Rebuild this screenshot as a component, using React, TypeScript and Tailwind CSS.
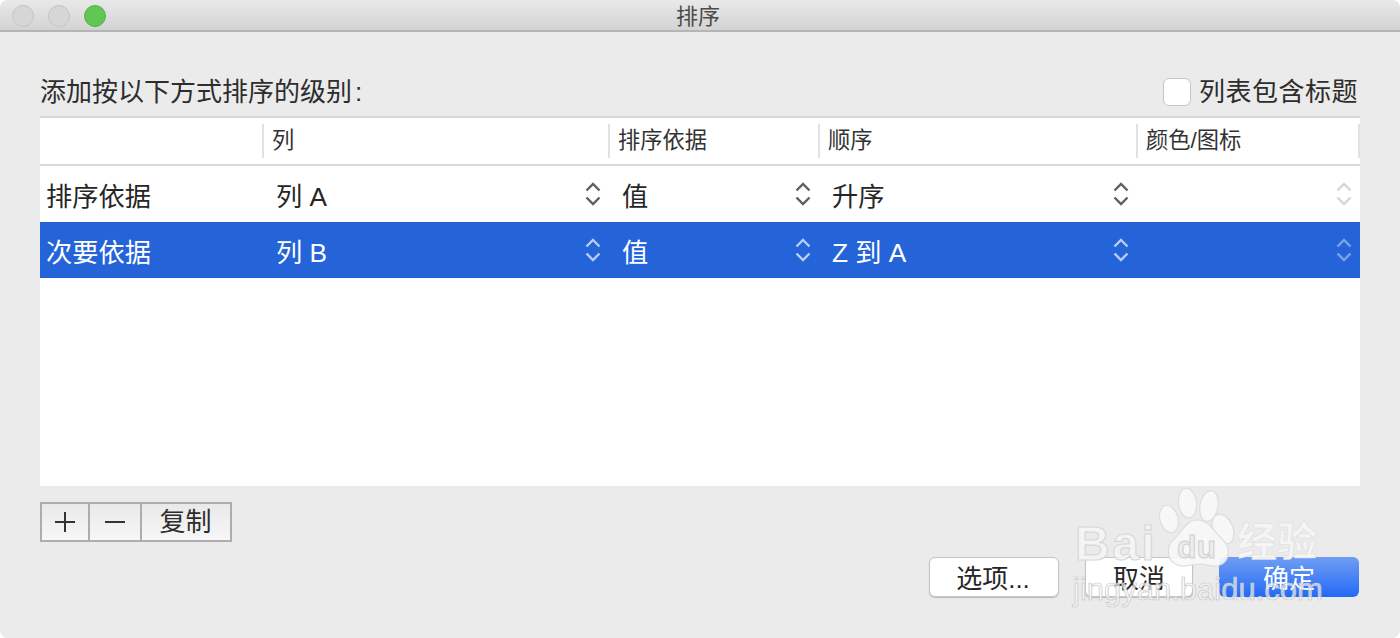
const cjk = "font-['Liberation_Sans','Noto_Sans_CJK_SC',sans-serif]";

function Chevrons({ color }: { color: string }) {
  return (
    <svg width="16" height="24" viewBox="0 0 16 24" fill="none" stroke={color} strokeWidth="2.4" className="shrink-0">
      <path d="M1.5 8.5 L8 2 L14.5 8.5" />
      <path d="M1.5 15.5 L8 22 L14.5 15.5" />
    </svg>
  );
}

function Cell({ w, text, color, chev, pl }: { w: string; text: string; color: string; chev: string; pl: string }) {
  return (
    <div className={`${w} ${pl} flex items-center justify-between pr-[7px] text-[26.25px] leading-none ${color}`}>
      <span className="whitespace-pre pt-[6px]">{text}</span>
      <Chevrons color={chev} />
    </div>
  );
}

function Row({ name, a, b, c, selected }: { name: string; a: string; b: string; c: string; selected?: boolean }) {
  const text = selected ? "text-white" : "text-[#262626]";
  const chev = selected ? "#b9cdf5" : "#5f5f5f";
  const faint = selected ? "#7ea3ea" : "#d6d6d6";
  return (
    <div className={`flex h-[56px] items-center ${selected ? "bg-[#2464d8]" : "bg-white"}`}>
      <div className={`w-[222px] pl-[6px] pt-[6px] text-[26.25px] leading-none ${text}`}>{name}</div>
      <Cell w="w-[346px]" pl="pl-[14px]" text={a} color={text} chev={chev} />
      <Cell w="w-[210px]" pl="pl-[14px]" text={b} color={text} chev={chev} />
      <Cell w="w-[318px]" pl="pl-[14px]" text={c} color={text} chev={chev} />
      <div className="flex w-[224px] justify-end pr-[8px]">
        <Chevrons color={faint} />
      </div>
    </div>
  );
}

function Head({ w, text, last }: { w: string; text: string; last?: boolean }) {
  return (
    <div className={`${w} relative h-[34px] border-l-2 border-[#e2e2e2] pl-[8px] text-[22.25px] leading-[34px] text-[#333333] ${last ? "border-r-2" : ""}`}>
      {text}
    </div>
  );
}

function Watermark() {
  return (
    <div className="pointer-events-none absolute left-[1072px] top-[486px] h-[125px] w-[260px]">
      <svg width="78" height="84" viewBox="0 0 78 84" className="absolute left-[86px] top-0" fill="#f8f8f8" stroke="#dddddd" strokeWidth="1.2" fillOpacity="0.9">
        <ellipse cx="11" cy="33" rx="9" ry="14" transform="rotate(-15 11 33)" />
        <ellipse cx="29.5" cy="17" rx="9" ry="15" transform="rotate(-6 29.5 17)" />
        <ellipse cx="51" cy="20" rx="9" ry="15.5" transform="rotate(10 51 20)" />
        <ellipse cx="65" cy="43" rx="10" ry="15.5" transform="rotate(-22 65 43)" />
        <path d="M39 34 C28 34 24 46 17 52 C6 60 8 80 26 80 C32 80 36 78 41 78 C48 78 52 81 58 80 C72 78 74 62 64 53 C56 46 52 34 39 34 Z" />
      </svg>
      <div className="absolute left-[3px] top-[34px] text-[48px] font-bold leading-none tracking-[2.5px] text-[#f6f6f6]/90 [-webkit-text-stroke:1.2px_#d8d8d8]">
        Bai
      </div>
      <div className="absolute left-[105px] top-[45px] text-[32px] font-bold leading-none text-[#ececec] [-webkit-text-stroke:1px_#cfcfcf]">du</div>
      <div className="absolute left-[165px] top-[36px] text-[40px] font-bold leading-none text-[#f6f6f6]/95 [-webkit-text-stroke:0.5px_#dcdcdc]">经验</div>
      <div className="absolute left-[1px] top-[88px] text-[31px] leading-none text-[#f7f7f7]/70 [-webkit-text-stroke:0.7px_#c8c8c8]">
        jingyan.baidu.com
      </div>
    </div>
  );
}

export default function App() {
  return (
    <div className={`relative h-[638px] w-[1400px] overflow-hidden rounded-[8px] bg-[#ebebeb] ${cjk}`}>
      <div className="flex h-[32px] items-center justify-center border-b-2 border-[#b5b5b5] bg-gradient-to-b from-[#e9e9e9] to-[#d3d3d3] pr-[4px]">
        <div className="absolute left-[12px] top-[5px] flex gap-[14px]">
          <div className="h-[22px] w-[22px] rounded-full border border-[#c4c4c4] bg-[#d6d6d6]" />
          <div className="h-[22px] w-[22px] rounded-full border border-[#c4c4c4] bg-[#d6d6d6]" />
          <div className="h-[22px] w-[22px] rounded-full border border-[#54b04a] bg-[#62c655]" />
        </div>
        <span className="pt-[4px] text-[22px] leading-none text-[#4c4c4c]">排序</span>
      </div>

      <div className="px-[40px]">
        <div className="flex h-[84px] items-end justify-between pb-[9px]">
          <span className="text-[26px] leading-[30px] text-[#2d2d2d]">
            添加按以下方式排序的级别<span className="ml-[3px]">:</span>
          </span>
          <label className="flex items-center gap-[8px] pr-[2px]">
            <span className="h-[28px] w-[28px] rounded-[6px] border border-[#c6c6c6] bg-white" />
            <span className="text-[26px] leading-[30px] tracking-[0.5px] text-[#2d2d2d]">列表包含标题</span>
          </label>
        </div>

        <div className="h-[370px] bg-white">
          <div className="flex h-[50px] items-center border-y-2 border-[#d8d8d8] bg-white">
            <div className="w-[222px]" />
            <Head w="w-[346px]" text="列" />
            <Head w="w-[210px]" text="排序依据" />
            <Head w="w-[318px]" text="顺序" />
            <Head w="w-[224px]" text="颜色/图标" last />
          </div>
          <Row name="排序依据" a="列 A" b="值" c="升序" />
          <Row name="次要依据" a="列 B" b="值" c="Z 到 A" selected />
        </div>

        <div className="mt-[16px] flex items-start justify-between">
          <div className="flex h-[40px] border-2 border-[#adadad] bg-gradient-to-b from-[#e9e9e9] to-[#f7f7f7] text-[#2d2d2d]">
            <div className="flex w-[48px] items-center justify-center border-r-2 border-[#adadad]">
              <svg width="22" height="22" viewBox="0 0 22 22" stroke="#333333" strokeWidth="2">
                <path d="M11 1 V21 M1 11 H21" />
              </svg>
            </div>
            <div className="flex w-[52px] items-center justify-center border-r-2 border-[#adadad]">
              <svg width="22" height="22" viewBox="0 0 22 22" stroke="#333333" strokeWidth="2">
                <path d="M1 11 H21" />
              </svg>
            </div>
            <div className="flex w-[88px] items-center justify-center pr-[1px] text-[26px] leading-none">复制</div>
          </div>

          <div className="mr-[1px] mt-[55px] flex items-center text-[26px] leading-none">
            <div className="flex h-[40px] w-[130px] items-center justify-center rounded-[6px] border border-[#c4c4c4] bg-white pt-[4px] text-[#262626] shadow-[0_1px_1px_rgba(0,0,0,0.2)]">
              <span className="pr-[2px]">选项...</span>
            </div>
            <div className="ml-[26px] flex h-[40px] w-[108px] items-center justify-center rounded-[6px] border border-[#c4c4c4] bg-white pt-[4px] text-[#262626] shadow-[0_1px_1px_rgba(0,0,0,0.2)]">
              取消
            </div>
            <div className="ml-[26px] flex h-[40px] w-[140px] items-center justify-center rounded-[6px] bg-gradient-to-b from-[#6f9df3] to-[#2169f5] pt-[4px] text-white">
              确定
            </div>
          </div>
        </div>
      </div>
      <Watermark />
    </div>
  );
}
